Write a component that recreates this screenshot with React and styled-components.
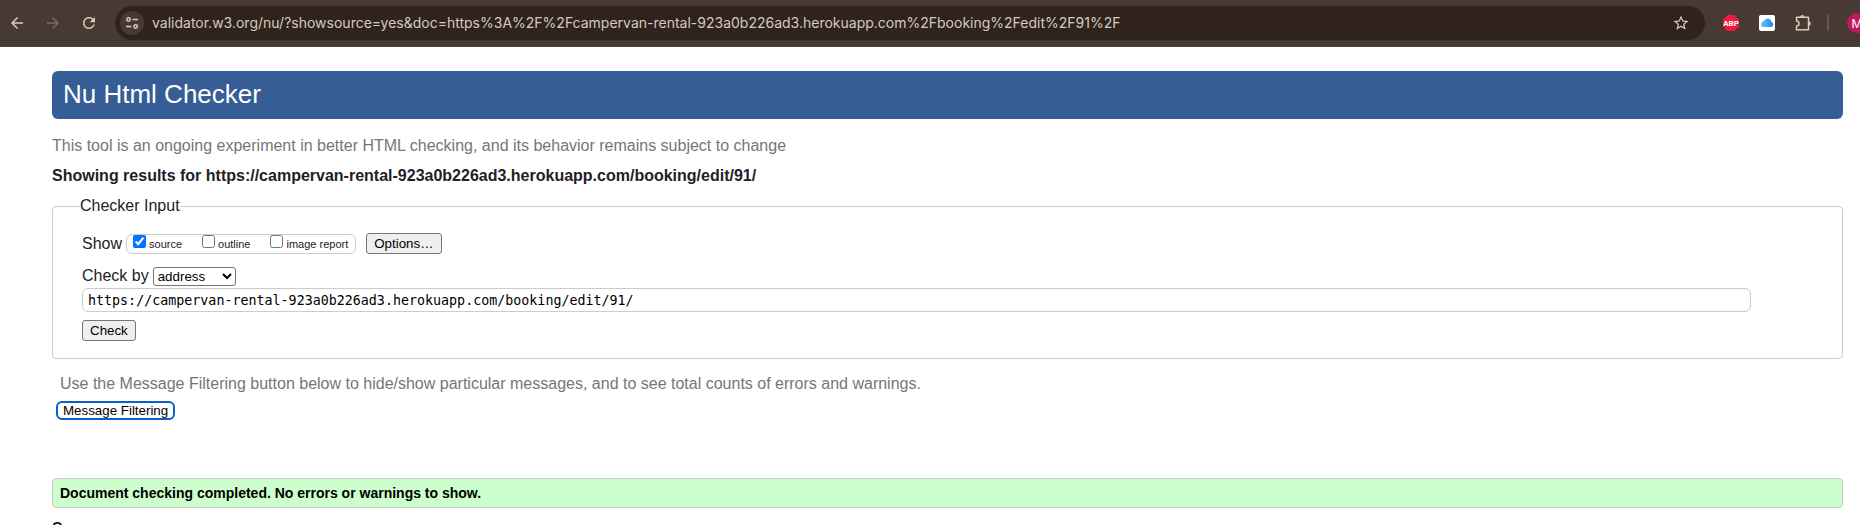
import React from "react";
import styled, { createGlobalStyle } from "styled-components";

const GlobalStyle = createGlobalStyle`
  *, *::before, *::after { box-sizing: border-box; }
  html { overflow: hidden; }
  body {
    margin: 0;
    background: #fff;
    color: #1f2126;
    font-family: "Liberation Sans", Arial, sans-serif;
    font-size: 16px;
    line-height: 20px;
  }
`;

const Toolbar = styled.header`
  display: flex;
  align-items: center;
  height: 47px;
  padding-left: 5px;
  overflow: hidden;
  background: #473a33;
  border-bottom: 1px solid #4d4845;
`;

const IconButton = styled.button`
  display: flex;
  flex: none;
  align-items: center;
  justify-content: center;
  width: 24px;
  height: 24px;
  padding: 0;
  border: 0;
  border-radius: 50%;
  background: ${(p) => p.$fill || "transparent"};
  color: ${(p) => p.$tone || "#dcc9bd"};
`;

const Avatar = styled(IconButton)`
  width: 20px;
  height: 20px;
  margin-left: 6px;
  background: #c2185b;
  color: #fff;
  font: 400 12px Inter, "Liberation Sans", sans-serif;
`;

const NavGroup = styled.nav`
  display: flex;
  gap: 12px;
  margin-right: 14px;
`;

const AddressBar = styled.div`
  display: flex;
  flex: 1;
  align-items: center;
  gap: 8px;
  height: 34px;
  padding: 0 12px 0 5px;
  border-radius: 17px;
  background: #30231c;
`;

const AddressInput = styled.input`
  flex: 1;
  min-width: 0;
  padding: 0;
  border: 0;
  outline: 0;
  background: transparent;
  color: #d3cac4;
  font: 14px/20px Inter, "Liberation Sans", sans-serif;
`;

const Extensions = styled.div`
  display: flex;
  flex: none;
  align-items: center;
  gap: 12px;
  margin-left: 14px;
  margin-right: -7px;
`;

const Divider = styled.span`
  width: 2px;
  height: 16px;
  background: #66564d;
`;

const Page = styled.main`
  padding: 24px 17px 0 52px;
`;

const Banner = styled.h1`
  margin: 0 0 17px;
  padding: 7px 11px 9px;
  border-radius: 6px;
  background: #365d95;
  color: #fff;
  font-size: 26px;
  font-weight: 400;
  line-height: 32px;
`;

const Note = styled.p`
  margin: 0 0 ${(p) => (p.$inset ? 7 : 10)}px;
  padding-left: ${(p) => (p.$inset ? 8 : 0)}px;
  color: #767676;
`;

const Heading = styled.h2`
  margin: 0 0 10px;
  font-size: 16px;
  font-weight: 700;
`;

const InputPanel = styled.fieldset`
  margin: 0 0 15px;
  padding: 17px 91px 17px 29px;
  border: 1px solid #ccc;
  border-radius: 4px;
`;

const PanelTitle = styled.legend`
  margin-left: -2px;
  padding: 0;
`;

const Row = styled.div`
  display: flex;
  align-items: center;
  gap: 4px;
  margin-bottom: ${(p) => p.$below || 0}px;
`;

const ShowGroup = styled.div`
  display: flex;
  gap: 20px;
  height: 20px;
  margin-right: 6px;
  padding: 0 7px 0 6px;
  border: 1px solid #ccc;
  border-radius: 6px;
`;

const CheckLabel = styled.label`
  display: flex;
  gap: 3px;
  font-size: 11px;
  line-height: 18px;
`;

const CheckBox = styled.input`
  width: 13px;
  height: 13px;
  margin: 0;
`;

const PushButton = styled.button`
  display: block;
  height: 21px;
  padding: 0 7px;
  border: 1px solid #767676;
  border-radius: 3px;
  background: #efefef;
  color: #000;
  font-family: inherit;
`;

const FilterButton = styled(PushButton)`
  height: 19px;
  margin: 0 0 58px 4px;
  padding: 0 5px;
  border: 2px solid #0b5fcc;
  border-radius: 6px;
  background: #fff;
`;

const MethodSelect = styled.select`
  width: 83px;
  height: 19px;
  border: 1px solid #767676;
  border-radius: 3px;
  background: #fff;
  color: #000;
  font-family: inherit;
`;

const UrlInput = styled.input`
  display: block;
  width: 100%;
  height: 24px;
  margin-bottom: 8px;
  padding: 0 5px;
  border: 1px solid #ccc;
  border-radius: 6px;
  color: #000;
  font-family: "DejaVu Sans Mono", monospace;
`;

const Success = styled.p`
  margin: 0 0 11px;
  padding: 4px 7px;
  border: 1px solid #ccc;
  border-radius: 4px;
  background: #cfc;
  color: #000;
  font-size: 14px;
  font-weight: 700;
`;

const Glyph = ({ d }) => (
  <svg width="18" height="18" viewBox="0 0 24 24" fill="currentColor" aria-hidden="true">
    <path d={d} />
  </svg>
);

const GLYPHS = {
  back: "M20 11H7.830l5.590-5.590L12 4l-8 8 8 8 1.410-1.410L7.830 13H20v-2z",
  forward: "M12 4l-1.410 1.410L16.170 11H4v2h12.170l-5.580 5.590L12 20l8-8z",
  reload:
    "M17.650 6.350C16.200 4.900 14.210 4 12 4c-4.420 0-7.990 3.580-7.990 8s3.570 8 7.990 8c3.730 0 6.840-2.550 7.730-6h-2.080c-.82 2.330-3.040 4-5.650 4-3.310 0-6-2.690-6-6s2.690-6 6-6c1.660 0 3.140.69 4.220 1.780L13 11h7V4l-2.350 2.350z",
  star: "M22 9.240l-7.190-.62L12 2 9.190 8.630 2 9.240l5.460 4.730L5.820 21 12 17.270 18.180 21l-1.630-7.030L22 9.240zM12 15.400l-3.760 2.270 1-4.280-3.320-2.880 4.380-.38L12 6.100l1.710 4.040 4.380.38-3.320 2.880 1 4.280L12 15.400z",
};

const SHOW_OPTIONS = [
  { label: "source", on: true },
  { label: "outline", on: false },
  { label: "image report", on: false },
];

const DOC_URL = "https://campervan-rental-923a0b226ad3.herokuapp.com/booking/edit/91/";

function BrowserBar() {
  return (
    <Toolbar>
      <NavGroup aria-label="History">
        <IconButton aria-label="Back">
          <Glyph d={GLYPHS.back} />
        </IconButton>
        <IconButton aria-label="Forward" $tone="#7c6b61">
          <Glyph d={GLYPHS.forward} />
        </IconButton>
        <IconButton aria-label="Reload">
          <Glyph d={GLYPHS.reload} />
        </IconButton>
      </NavGroup>
      <AddressBar>
        <IconButton aria-label="Site information" $fill="#473a33">
          <svg width="14" height="14" viewBox="0 0 14 14" fill="none" stroke="currentColor" strokeWidth="1.5" aria-hidden="true">
            <circle cx="3.500" cy="3.500" r="1.700" />
            <path d="M7.500 3.500H13M1 10.500h5.500" />
            <circle cx="10.700" cy="10.500" r="1.700" />
          </svg>
        </IconButton>
        <AddressInput
          aria-label="Address"
          defaultValue="validator.w3.org/nu/?showsource=yes&doc=https%3A%2F%2Fcampervan-rental-923a0b226ad3.herokuapp.com%2Fbooking%2Fedit%2F91%2F"
        />
        <IconButton aria-label="Bookmark this page">
          <Glyph d={GLYPHS.star} />
        </IconButton>
      </AddressBar>
      <Extensions>
        <IconButton aria-label="Adblock Plus">
          <svg width="16" height="16" viewBox="0 0 16 16" aria-hidden="true">
            <path fill="#ed1c45" d="M4.700 0h6.600L16 4.700v6.600L11.300 16H4.700L0 11.300V4.700z" />
            <text x="8" y="11" textAnchor="middle" fontFamily="Roboto, sans-serif" fontWeight="700" fontSize="8" fill="#fff">ABP</text>
          </svg>
        </IconButton>
        <IconButton aria-label="iCloud">
          <svg width="16" height="16" viewBox="0 0 16 16" aria-hidden="true">
            <defs>
              <linearGradient id="cloud" x1="0" x2="1">
                <stop offset="0" stopColor="#6cc7fb" />
                <stop offset="1" stopColor="#1c84f2" />
              </linearGradient>
            </defs>
            <rect width="16" height="16" rx="2" fill="#fff" />
            <path fill="url(#cloud)" d="M4.200 12A2.500 2.500 0 0 1 3.300 7.200 2.300 2.300 0 0 1 5.600 5.200 3.900 3.900 0 0 1 12.600 7 2.600 2.600 0 0 1 12 12z" />
          </svg>
        </IconButton>
        <IconButton aria-label="Extensions">
          <svg width="18" height="18" viewBox="0 0 18 18" fill="none" stroke="currentColor" strokeWidth="1.500" strokeLinejoin="round" aria-hidden="true">
            <path d="M2.500 3.200h12v12.500h-12V12a2.500 2.500 0 0 0 0-5z" />
            <path fill="currentColor" stroke="none" d="M6.300 3a2 2 0 0 1 4 0zM14.800 7.500a2 2 0 0 1 0 4z" />
          </svg>
        </IconButton>
        <Divider />
        <Avatar aria-label="Profile">M</Avatar>
      </Extensions>
    </Toolbar>
  );
}

export default function App() {
  return (
    <>
      <GlobalStyle />
      <BrowserBar />
      <Page>
        <Banner>Nu Html Checker</Banner>
        <Note>This tool is an ongoing experiment in better HTML checking, and its behavior remains subject to change</Note>
        <Heading>Showing results for {DOC_URL}</Heading>
        <InputPanel>
          <PanelTitle>Checker Input</PanelTitle>
          <Row $below={12}>
            <span>Show</span>
            <ShowGroup role="group" aria-label="Show">
              {SHOW_OPTIONS.map((o) => (
                <CheckLabel key={o.label}>
                  <CheckBox type="checkbox" defaultChecked={o.on} />
                  {o.label}
                </CheckLabel>
              ))}
            </ShowGroup>
            <PushButton type="button">Options…</PushButton>
          </Row>
          <Row $below={2}>
            <label htmlFor="method">Check by</label>
            <MethodSelect id="method" defaultValue="address">
              <option>address</option>
            </MethodSelect>
          </Row>
          <UrlInput aria-label="Document address" defaultValue={DOC_URL} />
          <PushButton type="submit">Check</PushButton>
        </InputPanel>
        <Note $inset>
          Use the Message Filtering button below to hide/show particular messages, and to see total counts of errors and warnings.
        </Note>
        <FilterButton type="button">Message Filtering</FilterButton>
        <Success>Document checking completed. No errors or warnings to show.</Success>
        <Heading>Source</Heading>
      </Page>
    </>
  );
}
